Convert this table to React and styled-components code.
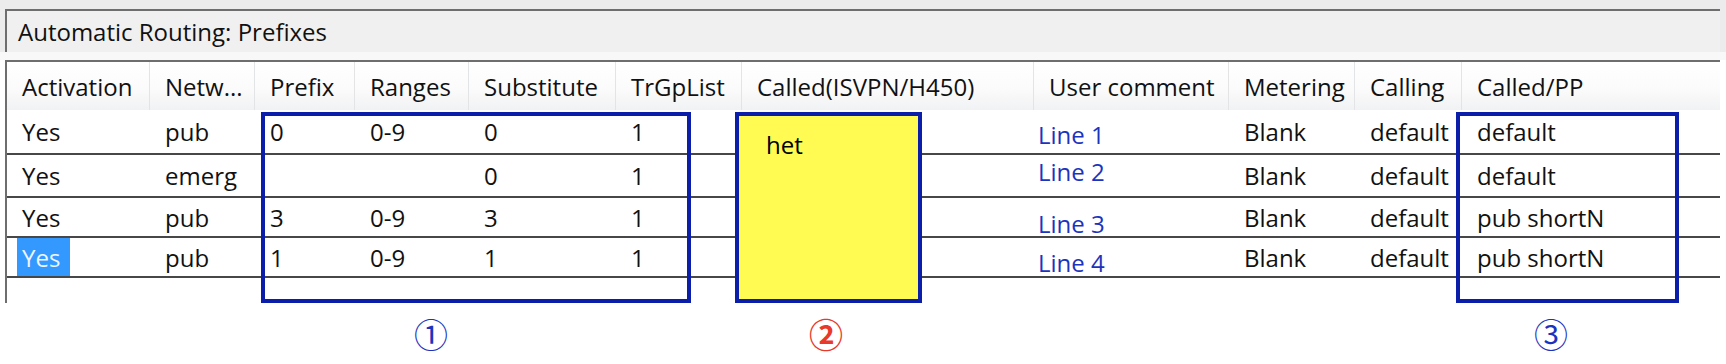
import React from "react";
import styled, { createGlobalStyle } from "styled-components";

const GlobalStyle = createGlobalStyle`
  html, body {
    margin: 0;
    padding: 0;
    background: #ffffff;
  }
  body {
    width: 1726px;
    height: 364px;
    overflow: hidden;
    font-family: "Open Sans", "Noto Sans", sans-serif;
  }
`;

const columns = [
    { key: "activation", label: "Activation", width: 143 },
    { key: "network", label: "Netw...", width: 105 },
    { key: "prefix", label: "Prefix", width: 100 },
    { key: "ranges", label: "Ranges", width: 114 },
    { key: "substitute", label: "Substitute", width: 147 },
    { key: "trgp", label: "TrGpList", width: 126 },
    { key: "called", label: "Called(ISVPN/H450)", width: 292 },
    { key: "comment", label: "User comment", width: 195 },
    { key: "metering", label: "Metering", width: 126 },
    { key: "calling", label: "Calling", width: 107 },
    { key: "calledpp", label: "Called/PP", width: null },
];

const template = columns.map(c => (c.width ? `${c.width}px` : "1fr")).join(" ");

const rows = [
    { id: 1, height: 45, shift: 3, selected: false, activation: "Yes", network: "pub", prefix: "0", ranges: "0-9", substitute: "0", trgp: "1", comment: "Line 1", metering: "Blank", calling: "default", calledpp: "default" },
    { id: 2, height: 43, shift: -4, selected: false, activation: "Yes", network: "emerg", prefix: "", ranges: "", substitute: "0", trgp: "1", comment: "Line 2", metering: "Blank", calling: "default", calledpp: "default" },
    { id: 3, height: 40, shift: 6, selected: false, activation: "Yes", network: "pub", prefix: "3", ranges: "0-9", substitute: "3", trgp: "1", comment: "Line 3", metering: "Blank", calling: "default", calledpp: "pub shortN" },
    { id: 4, height: 40, shift: 5, selected: true, activation: "Yes", network: "pub", prefix: "1", ranges: "0-9", substitute: "1", trgp: "1", comment: "Line 4", metering: "Blank", calling: "default", calledpp: "pub shortN" },
];

const App = () => {
    return (
        <Page>
            <GlobalStyle />
            <TopBand>
                <TitleBar>Automatic Routing: Prefixes</TitleBar>
            </TopBand>
            <Table>
                <HeaderRow>
                    {columns.map((col, i) => (
                        <HeaderCell key={col.key} last={i === columns.length - 1}>
                            {col.label}
                        </HeaderCell>
                    ))}
                </HeaderRow>
                <Body>
                    {rows.map(row => (
                        <Row key={row.id} $h={row.height}>
                            {columns.map(col => {
                                if (col.key === "activation" && row.selected) {
                                    return (
                                        <Cell key={col.key}>
                                            <Selected>{row.activation}</Selected>
                                        </Cell>
                                    );
                                }
                                if (col.key === "comment") {
                                    return (
                                        <CommentCell key={col.key}>
                                            <Comment $shift={row.shift}>{row.comment}</Comment>
                                        </CommentCell>
                                    );
                                }
                                if (col.key === "called") {
                                    return <Cell key={col.key} />;
                                }
                                return <Cell key={col.key}>{row[col.key]}</Cell>;
                            })}
                        </Row>
                    ))}
                    <Frame $left={254} $width={430} />
                    <NoteBox>het</NoteBox>
                    <Frame $left={1449} $width={223} />
                </Body>
            </Table>
            <Legend>
                <Marker $at={413}>①</Marker>
                <Marker $at={359} $accent>②</Marker>
                <Marker $at={689}>③</Marker>
            </Legend>
        </Page>
    );
};

export default App;

const Page = styled.div({
    width: '1726px',
    height: '364px',
    background: '#ffffff',
    color: '#000000',
    fontSize: '24px',
})

const TopBand = styled.div({
    background: '#ececec',
    padding: '9px 6px 0 5px',
    borderBottom: '8px solid #f8f8f8',
})

const TitleBar = styled.div({
    height: '41px',
    display: 'flex',
    alignItems: 'center',
    paddingLeft: '11px',
    background: '#f0f0f0',
    borderTop: '2px solid #6e6e6e',
    borderLeft: '2px solid #6e6e6e',
    color: '#111',
})

const Table = styled.div({
    margin: '0 6px 0 5px',
    borderTop: '2px solid #6e6e6e',
    borderLeft: '2px solid #6e6e6e',
    background: '#ffffff',
})

const HeaderRow = styled.div({
    display: 'grid',
    gridTemplateColumns: template,
    height: '48px',
    background: 'linear-gradient(#ffffff 0%, #fbfbfc 55%, #f1f2f3 100%)',
})

const HeaderCell = styled.div.withConfig({ shouldForwardProp: p => p !== 'last' })(({ last }) => ({
    display: 'flex',
    alignItems: 'center',
    paddingLeft: '15px',
    whiteSpace: 'nowrap',
    overflow: 'hidden',
    borderRight: last ? 'none' : '1px solid #e3e4e6',
    color: '#111',
}))

const Body = styled.div({
    position: 'relative',
    height: '193px',
})

const Row = styled.div(({ $h }) => ({
    display: 'grid',
    gridTemplateColumns: template,
    height: `${$h}px`,
    boxSizing: 'border-box',
    borderBottom: '2px solid #474747',
}))

const Cell = styled.div({
    display: 'flex',
    alignItems: 'center',
    paddingLeft: '15px',
    whiteSpace: 'nowrap',
    color: '#111',
})

const CommentCell = styled(Cell)({
    paddingLeft: '4px',
})

const Comment = styled.span(({ $shift }) => ({
    color: '#1c34bd',
    transform: `translateY(${$shift}px)`,
}))

const Selected = styled.span({
    display: 'flex',
    alignItems: 'center',
    alignSelf: 'stretch',
    marginLeft: '-5px',
    padding: '0 10px 0 5px',
    background: '#3399ff',
    color: '#eef5ff',
})

const Frame = styled.div(({ $left, $width }) => ({
    position: 'absolute',
    top: '2px',
    bottom: '0',
    left: `${$left}px`,
    width: `${$width}px`,
    boxSizing: 'border-box',
    border: '4px solid #0a1eaa',
}))

const NoteBox = styled.div({
    position: 'absolute',
    top: '2px',
    bottom: '0',
    left: '728px',
    width: '187px',
    boxSizing: 'border-box',
    border: '4px solid #0a1eaa',
    background: '#fffb52',
    padding: '12px 0 0 27px',
    color: '#000',
})

const Legend = styled.div({
    display: 'flex',
    alignItems: 'center',
    height: '61px',
})

const Marker = styled.span(({ $at, $accent }) => ({
    marginLeft: `${$at}px`,
    width: '36px',
    textAlign: 'center',
    fontFamily: '"Noto Sans CJK JP", "Noto Sans", sans-serif',
    fontSize: '34px',
    fontWeight: $accent ? 700 : 400,
    color: $accent ? '#e8392b' : '#1c34bd',
    lineHeight: 1,
}))
